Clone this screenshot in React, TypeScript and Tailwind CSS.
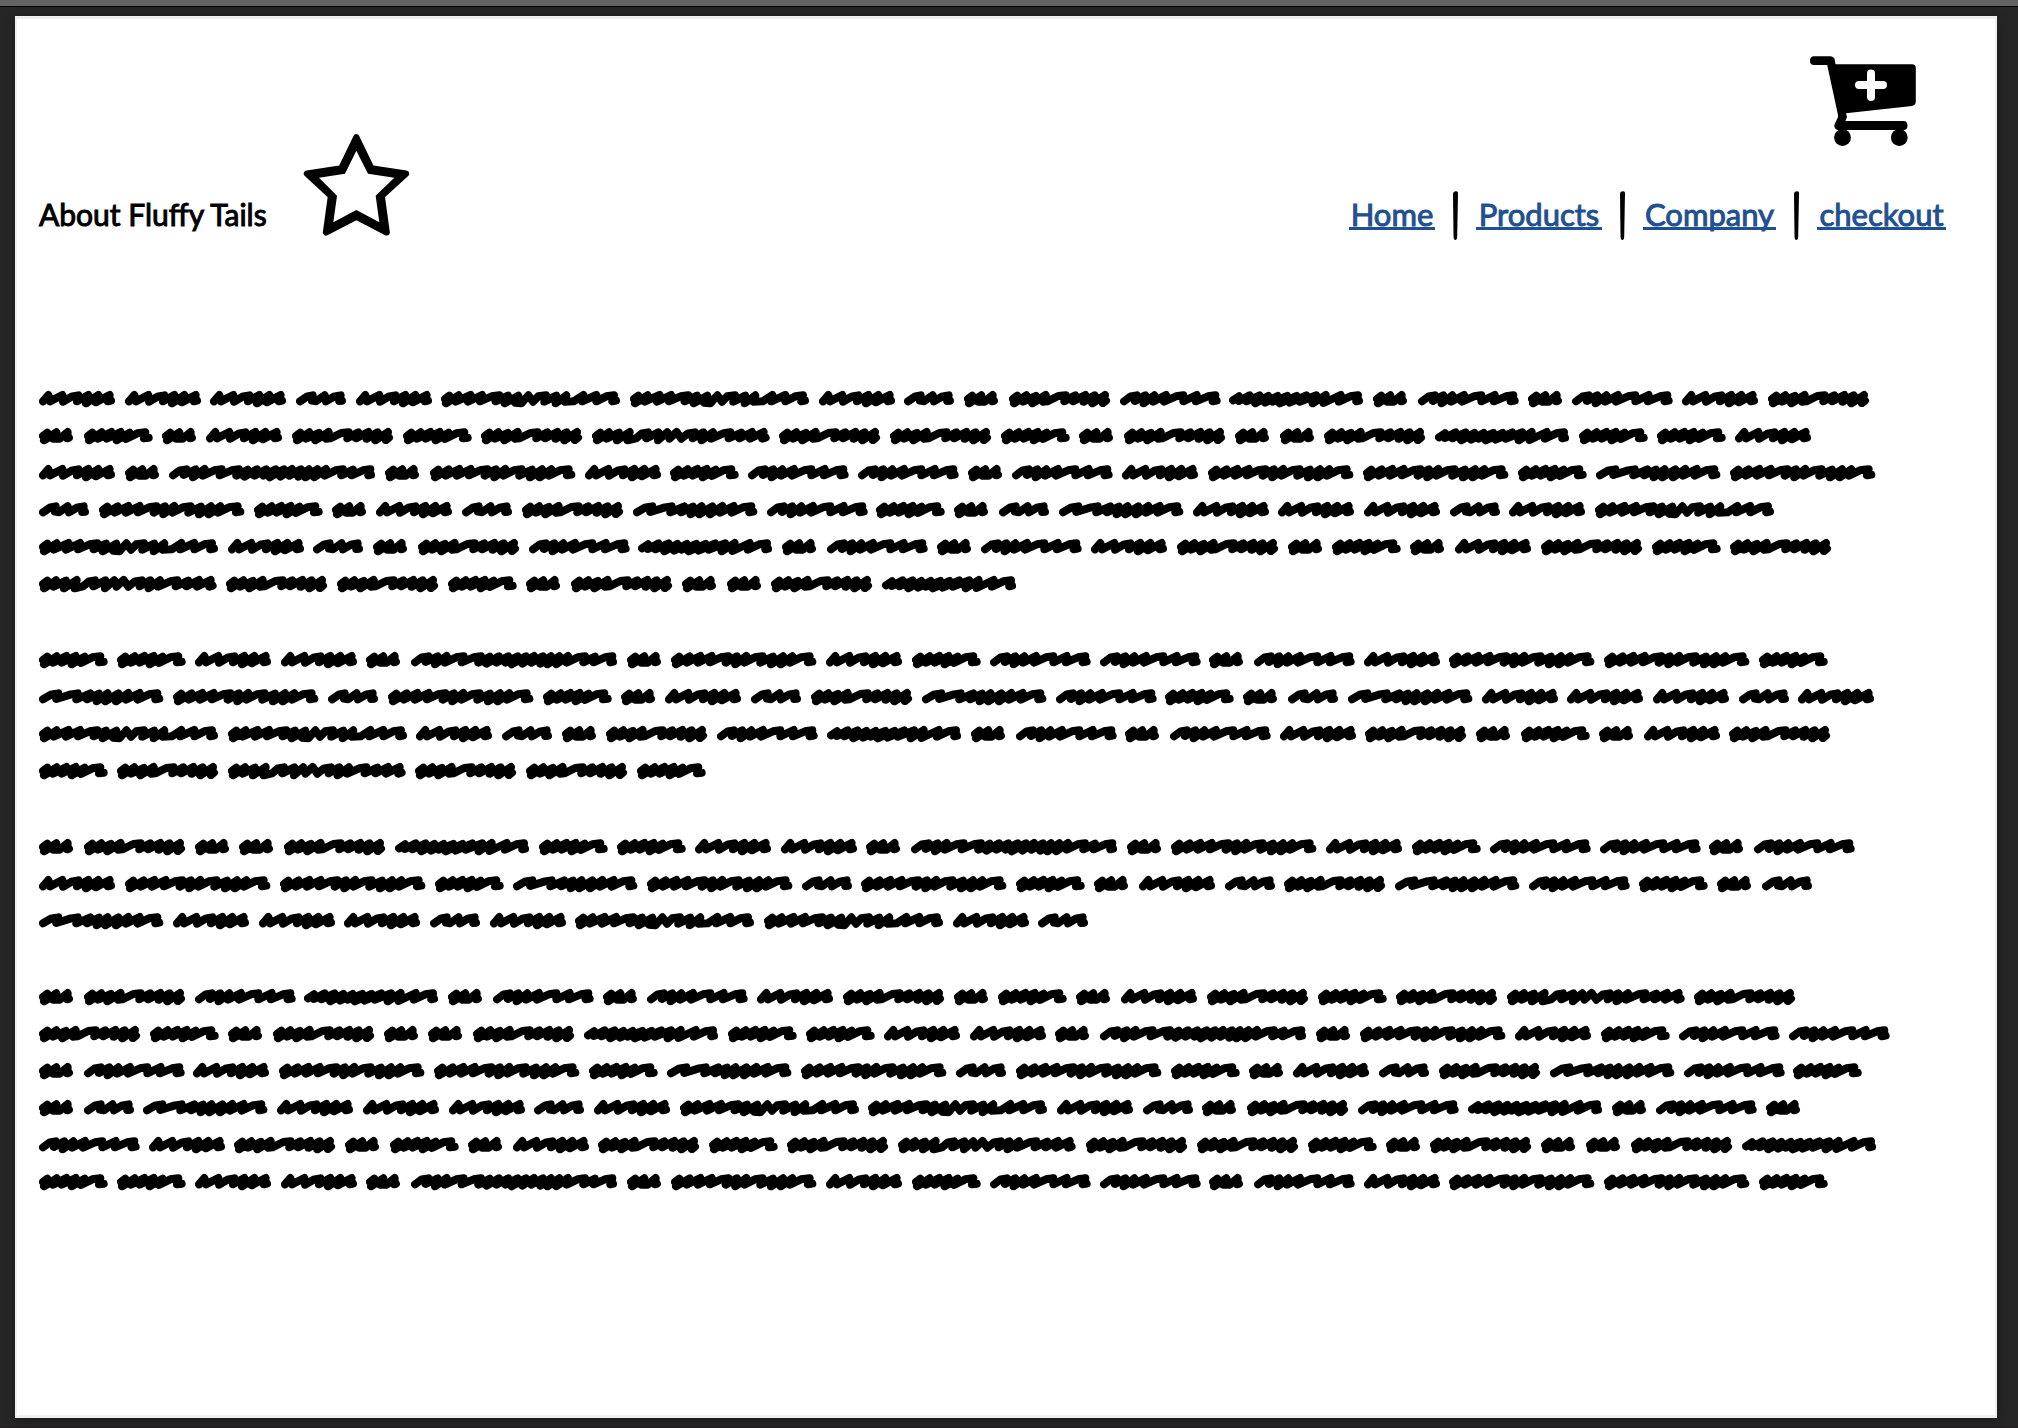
import React from "react";

type Word = "M" | "N" | "A1" | "A4" | "A6" | "N6" | "N8" | "C8" | "A9" | "A10" | "P10" | "N12";

// Scribbled placeholder words: advance and pen path, in thirds of a pixel.
const WORDS: Record<Word, { advance: number; pen: string }> = {
  M: { advance: 257, pen: "12,34 28,15 33,34 70,15 72,35 100,19 118,16 114,34 148,15 141,40 178,15 170,37 212,15 207,34 216,32" },
  N: { advance: 179, pen: "12,34 34,19 50,16 48,32 60,34 86,16 90,34 116,19 134,16 130,33 138,32" },
  A1: { advance: 134, pen: "12,27 25,17 15,40 52,16 42,35 62,35 86,15 85,34 90,32" },
  A4: { advance: 234, pen: "12,27 25,17 15,40 53,16 42,35 82,15 68,35 110,15 98,40 137,17 126,36 160,19 184,16 180,34 194,32" },
  A6: {
    advance: 333,
    pen: "12,27 25,17 15,40 52,16 42,35 81,18 70,40 110,15 102,35 115,34 148,18 170,16 166,34 199,16 192,34 229,15 224,35 257,16 250,40 288,15 282,39 291,32",
  },
  N6: {
    advance: 329,
    pen: "12,34 32,19 50,16 45,33 76,16 71,40 103,16 99,35 138,15 132,35 168,19 190,16 190,34 230,15 228,34 264,19 286,16 278,34 290,32",
  },
  N8: {
    advance: 402,
    pen: "12,34 38,19 58,16 52,33 96,19 116,16 112,34 154,16 144,34 180,17 173,40 206,16 199,40 238,16 231,40 268,15 261,35 302,15 296,35 330,19 355,16 349,34 361,32",
  },
  C8: {
    advance: 432,
    pen: "12,31 30,19 30,33 62,16 52,34 92,16 79,40 118,18 108,38 146,18 130,35 175,18 152,40 203,18 182,38 232,16 212,35 262,16 251,40 290,15 284,39 335,15 330,35 364,19 387,16 382,34 390,32",
  },
  A9: {
    advance: 465,
    pen: "12,27 25,17 15,40 56,16 47,35 88,15 81,35 122,15 117,34 150,19 172,16 164,35 198,16 193,40 226,15 220,35 252,19 275,16 268,35 306,17 300,40 336,16 329,40 364,16 357,35 390,19 416,16 411,34 424,32",
  },
  A10: {
    advance: 566,
    pen: "12,27 25,17 15,40 53,16 44,35 89,15 81,35 123,15 117,34 152,19 175,16 164,34 201,17 191,40 232,17 222,38 241,40 262,16 276,35 292,19 315,16 310,35 346,17 344,40 376,16 370,35 398,34 427,15 424,34 466,15 466,34 496,19 519,16 514,34 525,32",
  },
  P10: {
    advance: 562,
    pen: "12,27 25,17 15,40 51,16 44,35 81,17 75,40 113,15 107,40 132,34 150,19 168,16 163,34 199,16 198,40 226,16 232,35 254,15 268,35 288,19 308,16 302,34 334,16 329,40 363,16 358,35 394,19 415,16 410,34 448,17 442,34 480,15 474,35 515,15 511,35 521,32",
  },
  N12: {
    advance: 647,
    pen: "12,34 32,19 52,16 44,33 80,16 72,40 107,15 102,35 136,19 158,16 152,34 188,19 210,16 202,35 236,17 226,38 264,16 256,35 292,16 283,35 320,16 302,40 345,16 334,38 369,15 361,35 396,16 388,38 420,16 409,40 445,16 436,40 471,15 467,35 500,19 522,16 517,34 552,17 548,34 582,19 604,16 598,34 606,32",
  },
};

const PARAGRAPHS: string[] = [
  `M M M N M A10 A10 M N A1 A6 N6 C8 A1 N6 A1 N6 M A6
   A1 A4 A1 M A6 A4 A6 P10 A6 A6 A4 A1 A6 A1 A1 A6 C8 A4 A4 M
   M A1 N12 A1 A9 M A4 N6 N6 A1 N6 M A9 A9 A4 N8 A9
   N A9 A4 A1 M N A6 N8 N6 A4 A1 N N8 M M M N M A10
   A10 M N A1 A6 N6 C8 A1 N6 A1 N6 M A6 A1 A4 A1 M A6 A4 A6
   P10 A6 A6 A4 A1 A6 A1 A1 A6 C8`,
  `A4 A4 M M A1 N12 A1 A9 M A4 N6 N6 A1 N6 M A9 A9 A4
   N8 A9 N A9 A4 A1 M N A6 N8 N6 A4 A1 N N8 M M M N M
   A10 A10 M N A1 A6 N6 C8 A1 N6 A1 N6 M A6 A1 A4 A1 M A6
   A4 A6 P10 A6 A6 A4`,
  `A1 A6 A1 A1 A6 C8 A4 A4 M M A1 N12 A1 A9 M A4 N6 N6 A1 N6
   M A9 A9 A4 N8 A9 N A9 A4 A1 M N A6 N8 N6 A4 A1 N
   N8 M M M N M A10 A10 M N`,
  `A1 A6 N6 C8 A1 N6 A1 N6 M A6 A1 A4 A1 M A6 A4 A6 P10 A6
   A6 A4 A1 A6 A1 A1 A6 C8 A4 A4 M M A1 N12 A1 A9 M A4 N6 N6
   A1 N6 M A9 A9 A4 N8 A9 N A9 A4 A1 M N A6 N8 N6 A4
   A1 N N8 M M M N M A10 A10 M N A1 A6 N6 C8 A1 N6 A1
   N6 M A6 A1 A4 A1 M A6 A4 A6 P10 A6 A6 A4 A1 A6 A1 A1 A6 C8
   A4 A4 M M A1 N12 A1 A9 M A4 N6 N6 A1 N6 M A9 A9 A4`,
];

function Scribble({ word }: { word: Word }) {
  const { advance, pen } = WORDS[word];
  return (
    <svg
      className="mb-[19px] h-[18px] shrink-0"
      style={{ width: advance / 3 }}
      viewBox={`0 0 ${advance} 54`}
      fill="none"
      stroke="#000"
      strokeWidth="24"
      strokeLinecap="round"
      strokeLinejoin="round"
      aria-hidden="true"
    >
      <polyline points={pen} />
    </svg>
  );
}

function Star() {
  return (
    <svg className="mb-1 h-[103px] w-[107px]" viewBox="912 399 321 309" aria-hidden="true">
      <polygon
        points="1072,412 1117,505 1221,521 1148,588 1163,697 1072,650 981,697 996,588 924,521 1027,505"
        stroke="#000"
        strokeWidth="19"
        strokeLinejoin="round"
      />
      <polygon
        points="1072,452 1107,521 1186,533 1130,587 1141,667 1072,630 1003,667 1014,587 960,533 1038,521"
        fill="#fff"
      />
    </svg>
  );
}

function Cart() {
  return (
    <svg className="h-[90px] w-[106px]" viewBox="0 0 106 90" aria-hidden="true">
      <path d="M4 0.3H20Q24 0.3 24.8 4L25.5 8.3H102Q105.8 8.3 105.8 12V45.5Q105.8 49 102 50L36 57.3L37 61L35.4 65H93.5Q97.5 65 97.5 69.5T93.5 74H28Q24.3 73.5 24.3 69L28 61V59L17.2 9H4Q0 9 0 4.7T4 0.3Z" />
      <circle cx="32.5" cy="81.5" r="8.4" />
      <circle cx="89.3" cy="81.5" r="8.4" />
      <path d="M49 29H73M61 17.5V41" stroke="#fff" strokeWidth="8" strokeLinecap="round" />
    </svg>
  );
}

function Divider() {
  return (
    <svg className="h-[49px] w-[5px]" viewBox="0 0 5 49" aria-hidden="true">
      <path d="M0 3Q0 0.5 3 0.2Q5 0 5 2L4.2 46Q4 49 2.3 49Q0.6 49 0.5 45Z" />
    </svg>
  );
}

const LINKS = [
  { label: "Home", width: "w-[86px]" },
  { label: "Products", width: "w-[126px]" },
  { label: "Company", width: "w-[133px]" },
  { label: "checkout", width: "w-[129px]" },
];

export default function App() {
  return (
    <div className="flex min-h-screen flex-col border-b border-[#251c22] bg-[#262626] font-['Lato',sans-serif] text-[30px] leading-[26px] text-black [-webkit-text-stroke:1px]">
      <div className="h-[7px] border-b border-black bg-[#636363]" />
      <main className="mt-[9px] mr-[21px] mb-[9px] ml-[15px] flex-1 border-x-2 border-y-3 border-[#f0f0f0] bg-white pl-[22px] shadow-[0_2px_10px_rgba(0,0,0,0.35)]">
        <header className="flex items-end justify-between pt-[37px] pr-[49px]">
          <div className="flex items-end gap-9">
            <h1 className="mb-[13px] whitespace-nowrap">About Fluffy Tails</h1>
            <Star />
          </div>
          <div className="flex flex-col items-end gap-[45px]">
            <button type="button" aria-label="Add to cart" className="mr-[30px]">
              <Cart />
            </button>
            <nav className="flex items-center gap-[18px] text-[31px] leading-[26px]">
              {LINKS.map((link, i) => (
                <React.Fragment key={link.label}>
                  {i > 0 && <Divider />}
                  <a
                    href="#"
                    className={`${link.width} border-b-3 border-[#1f5191] text-center whitespace-nowrap text-[#1f5191]`}
                  >
                    {link.label}
                  </a>
                </React.Fragment>
              ))}
            </nav>
          </div>
        </header>
        <section className="mt-[150px] flex flex-col gap-[39px] pr-[94px]">
          {PARAGRAPHS.map((paragraph, i) => (
            <div key={i} className="flex flex-wrap">
              {paragraph.split(/\s+/).map((word, j) => (
                <Scribble key={j} word={word as Word} />
              ))}
            </div>
          ))}
        </section>
      </main>
    </div>
  );
}
